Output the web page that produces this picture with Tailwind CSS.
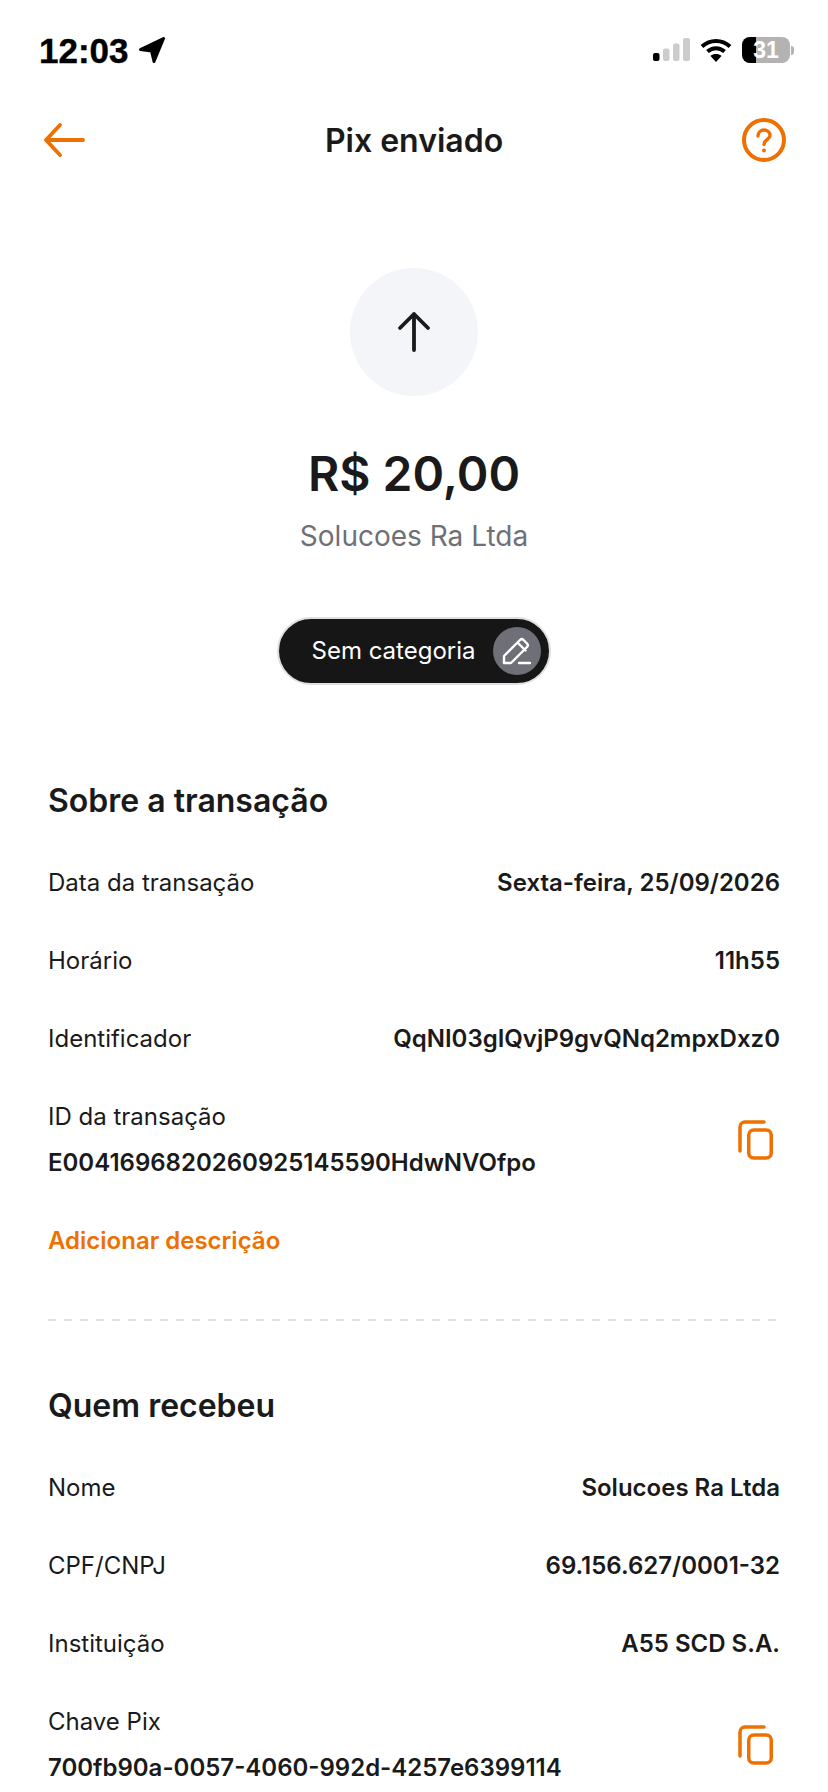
<!DOCTYPE html>
<html lang="en">
<head>
    <meta charset="UTF-8">
    <meta name="viewport" content="width=device-width, initial-scale=1.0">
    <title>Pix enviado</title>
    <script src="https://cdn.jsdelivr.net/npm/@tailwindcss/browser@4"></script>
</head>
<body class="bg-white">
    <div class="w-[828px] h-[1792px] overflow-hidden font-['Inter',sans-serif] text-[#1a1a1a]">
        <!-- Status bar -->
        <div class="h-[100px] flex items-center justify-between pl-[39px] pr-[34px]">
            <div class="flex items-center gap-[9px] text-black">
                <span class="font-['Liberation_Sans',sans-serif] font-bold text-[35px] leading-none [-webkit-text-stroke:0.4px_#000]">12:03</span>
                <svg width="28" height="28" viewBox="0 0 28 28"><path d="M2.500 13.500 25.500 2.500 16 25.500 13.500 15z" fill="#000" stroke="#000" stroke-width="3" stroke-linejoin="round"/></svg>
            </div>
            <div class="flex items-center gap-[10px]">
                <svg width="37" height="24" viewBox="0 0 37 24">
                    <rect x="0" y="15" width="6.500" height="8" rx="2" fill="#000"/>
                    <rect x="10" y="10.500" width="6.500" height="12.500" rx="2" fill="#ccc"/>
                    <rect x="20" y="5.500" width="6.500" height="17.500" rx="2" fill="#ccc"/>
                    <rect x="30" y="0" width="7" height="23" rx="2" fill="#ccc"/>
                </svg>
                <svg width="32" height="24" viewBox="0 0 32 24" fill="none">
                    <path d="M2 8.500C10 1 22 1 30 8.500" stroke="#000" stroke-width="4"/>
                    <path d="M7.500 13.500C12.500 9 19.500 9 24.500 13.500" stroke="#000" stroke-width="4"/>
                    <path d="M16 24l-5.500-6c3-2.600 8-2.600 11 0z" fill="#000"/>
                </svg>
                <div class="relative w-[48px] h-[26px] rounded-[8px] bg-[#b3b3b3] overflow-hidden flex items-center justify-center">
                    <div class="absolute left-0 top-0 bottom-0 w-[14px] bg-black"></div>
                    <span class="relative font-['Liberation_Sans',sans-serif] font-bold text-[23px] leading-none text-white">31</span>
                </div>
                <div class="w-[3px] h-[9px] -ml-[9px] rounded-r-full bg-[#b3b3b3]"></div>
            </div>
        </div>

        <!-- Header -->
        <div class="h-[80px] flex items-center justify-between pl-[42px] pr-[42px]">
            <svg width="44" height="36" viewBox="0 0 44 36" fill="none" stroke="#ee7000" stroke-width="3.800" stroke-linecap="round" stroke-linejoin="round"><path d="M41 18H4M18 3 4 18l14 15"/></svg>
            <h1 class="mt-[2px] text-[32px] font-semibold leading-none">Pix enviado</h1>
            <svg width="44" height="44" viewBox="0 0 44 44" fill="none" stroke="#ee7000" stroke-width="4" stroke-linecap="round"><circle cx="22" cy="22" r="20"/><path d="M16 18c0-3.500 2.800-6 6-6s6 2.300 6 5.500c0 4-6 4.500-6 9" stroke-width="3.400"/><circle cx="22" cy="32.500" r="1" fill="#ee7000" stroke-width="2"/></svg>
        </div>

        <!-- Amount -->
        <div class="flex flex-col items-center pt-[88px]">
            <div class="w-[128px] h-[128px] rounded-full bg-[#f4f5f9] flex items-center justify-center">
                <svg width="34" height="42" viewBox="0 0 34 42" fill="none" stroke="#1a1a1a" stroke-width="3.800" stroke-linecap="round" stroke-linejoin="round"><path d="M17 39V3M3 17 17 3l14 14"/></svg>
            </div>
            <div class="mt-[48px] text-[48px] leading-[60px] font-semibold">R$ 20,00</div>
            <div class="mt-[15px] text-[28px] leading-[34px] text-[#6f7077]">Solucoes Ra Ltda</div>
            <div class="mt-[64px] h-[68px] pl-[32px] pr-[8px] flex items-center gap-[17px] rounded-full bg-[#161616] border-[2px] border-[#dedee4]">
                <span class="text-[24px] text-white">Sem categoria</span>
                <div class="w-[48px] h-[48px] rounded-full bg-[#6f7077] flex items-center justify-center">
                    <svg width="30" height="30" viewBox="0 0 30 30" fill="none" stroke="#fff" stroke-width="2.400" stroke-linejoin="round" stroke-linecap="round"><path d="M2 27V20L18 4c1-1 2.500-1 3.500 0l3.500 3.500c1 1 1 2.500 0 3.500L9 27zM15.500 6.500l8 8M17 27h11"/></svg>
                </div>
            </div>
        </div>

        <!-- Sobre a transacao -->
        <div class="px-[48px] mt-[96px]">
            <h2 class="text-[32px] leading-[40px] font-semibold">Sobre a transação</h2>
            <div class="mt-[45px] flex flex-col gap-[44px] text-[24px] leading-[34px]">
                <div class="flex justify-between"><span>Data da transação</span><span class="font-semibold">Sexta-feira, 25/09/2026</span></div>
                <div class="flex justify-between"><span>Horário</span><span class="font-semibold">11h55</span></div>
                <div class="flex justify-between"><span>Identificador</span><span class="font-semibold">QqNI03gIQvjP9gvQNq2mpxDxz0</span></div>
                <div class="flex justify-between items-center">
                    <div><div>ID da transação</div><div class="mt-[12px] font-semibold">E0041696820260925145590HdwNVOfpo</div></div>
                    <svg width="36" height="40" viewBox="0 0 36 40" fill="none" stroke="#ee7000" stroke-width="3.500" stroke-linecap="round" stroke-linejoin="round" class="mr-[6px]"><path d="M2 31V7a5 5 0 0 1 5-5h19"/><rect x="10.750" y="10" width="22.500" height="28" rx="5"/></svg>
                </div>
            </div>
            <div class="mt-[44px] text-[24px] leading-[34px] font-semibold text-[#ee7000]">Adicionar descrição</div>
            <div class="mt-[61px] h-[2px] bg-[repeating-linear-gradient(90deg,#dedee4_0,#dedee4_8px,transparent_8px,transparent_16px)]"></div>

            <h2 class="mt-[65px] text-[32px] leading-[40px] font-semibold">Quem recebeu</h2>
            <div class="mt-[45px] flex flex-col gap-[44px] text-[24px] leading-[34px]">
                <div class="flex justify-between"><span>Nome</span><span class="font-semibold">Solucoes Ra Ltda</span></div>
                <div class="flex justify-between"><span>CPF/CNPJ</span><span class="font-semibold">69.156.627/0001-32</span></div>
                <div class="flex justify-between"><span>Instituição</span><span class="font-semibold">A55 SCD S.A.</span></div>
                <div class="flex justify-between items-center">
                    <div><div>Chave Pix</div><div class="mt-[12px] font-semibold">700fb90a-0057-4060-992d-4257e6399114</div></div>
                    <svg width="36" height="40" viewBox="0 0 36 40" fill="none" stroke="#ee7000" stroke-width="3.500" stroke-linecap="round" stroke-linejoin="round" class="mr-[6px]"><path d="M2 31V7a5 5 0 0 1 5-5h19"/><rect x="10.750" y="10" width="22.500" height="28" rx="5"/></svg>
                </div>
            </div>
        </div>
    </div>
</body>
</html>
